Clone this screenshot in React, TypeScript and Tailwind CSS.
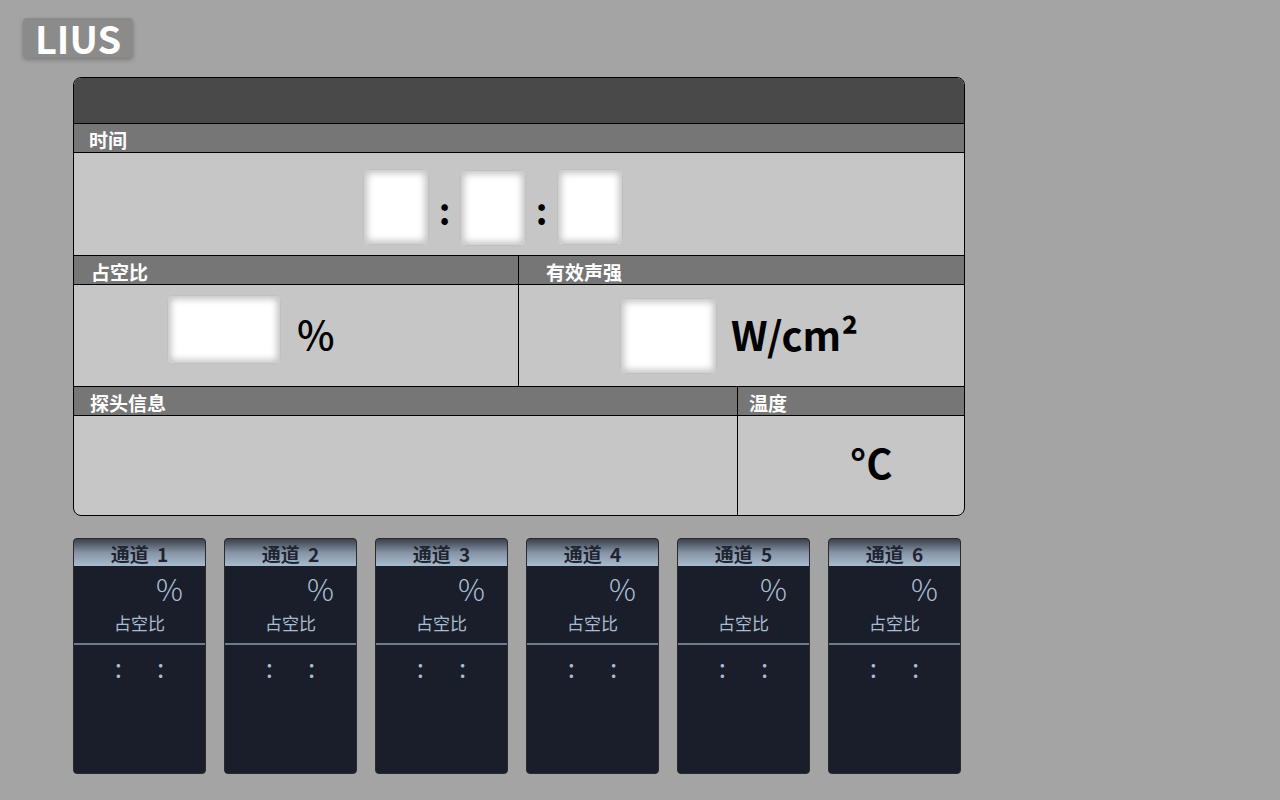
import React from "react"

const channels = [1, 2, 3, 4, 5, 6]

// white value slot with a soft grey inner edge
function Slot({ className }: { className: string }) {
  return <div className={`bg-white rounded-[6px] border border-[#c0c0c0] shadow-[inset_0_0_7px_3px_#c2c2c2] ${className}`} />
}

function SectionHead({ label, pad }: { label: string; pad: string }) {
  return (
    <div className={`h-[29px] bg-[#767676] border-b border-black flex items-center text-white font-bold text-[19px] leading-none ${pad}`}>
      <span className="mt-[2px]">{label}</span>
    </div>
  )
}

function ChannelCard({ n }: { n: number }) {
  return (
    <div className="w-[133px] h-[236px] rounded-[4px] border border-[#2a2a2a] bg-[#1a1d2a] overflow-hidden flex flex-col">
      <div className="h-[27px] bg-gradient-to-b from-[#3c414d] via-[#8593a4] to-[#a8bbcf] flex items-center justify-center text-[#1e2432] font-bold text-[19px] leading-none [word-spacing:4px]">
        <span className="mt-[1px]">通道 {n}</span>
      </div>
      <div className="mt-[7px] pr-[22px] text-right text-[#a9bdd2] text-[30px] font-light leading-none">%</div>
      <div className="mt-[11px] text-center text-[#a9bdd2] text-[17px] leading-none">占空比</div>
      <div className="mt-[12px] h-[2px] bg-[#6d7b8b]" />
      <div className="pt-[9px] flex justify-center gap-[35px] text-[#a9bdd2] text-[26px] leading-none">
        <span>:</span>
        <span>:</span>
      </div>
    </div>
  )
}

export default function App() {
  return (
    <div className="min-h-screen w-full bg-[#a4a4a4] font-['Noto_Sans_CJK_SC','Noto_Sans',sans-serif]">
      {/* logo */}
      <div className="pt-[18px] pl-[23px]">
        <div className="w-[110px] h-[40px] rounded-[4px] bg-[#8b8b8b] shadow-[0_2px_4px_rgba(0,0,0,0.25)] flex items-center justify-center text-white font-bold text-[38px] leading-none">
          LIUS
        </div>
      </div>

      {/* main panel */}
      <div className="ml-[73px] mt-[19px] w-[892px] border border-black rounded-[8px] overflow-hidden bg-[#c6c6c6]">
        <div className="h-[46px] bg-[#494949] border-b border-black" />

        <SectionHead label="时间" pad="pl-[15px]" />
        <div className="h-[103px] border-b border-black flex items-start pt-[16px] pl-[289px]">
          <Slot className="w-[66px] h-[76px]" />
          <div className="w-[31px] mt-[22px] flex justify-center text-black font-bold text-[36px] leading-none">:</div>
          <Slot className="w-[66px] h-[76px] mt-[1px]" />
          <div className="w-[31px] mt-[22px] flex justify-center text-black font-bold text-[36px] leading-none">:</div>
          <Slot className="w-[66px] h-[76px]" />
        </div>

        <div className="flex border-b border-black">
          <div className="w-[445px] border-r border-black flex flex-col">
            <SectionHead label="占空比" pad="pl-[17px]" />
            <div className="h-[101px] flex items-start pl-[93px]">
              <Slot className="w-[114px] h-[69px] mt-[10px]" />
              <div className="ml-[16px] mt-[28px] text-black font-medium text-[40px] leading-none">%</div>
            </div>
          </div>
          <div className="flex-1 flex flex-col">
            <SectionHead label="有效声强" pad="pl-[27px]" />
            <div className="h-[101px] flex items-start pl-[101px]">
              <Slot className="w-[97px] h-[76px] mt-[13px]" />
              <div className="ml-[14px] mt-[29px] text-black font-bold text-[40px] leading-none">W/cm²</div>
            </div>
          </div>
        </div>

        <div className="flex">
          <div className="w-[664px] border-r border-black flex flex-col">
            <SectionHead label="探头信息" pad="pl-[16px]" />
            <div className="h-[99px]" />
          </div>
          <div className="flex-1 flex flex-col">
            <SectionHead label="温度" pad="pl-[11px]" />
            <div className="h-[99px] pl-[112px] pt-[26px] text-black font-bold text-[40px] leading-none">°C</div>
          </div>
        </div>
      </div>

      {/* channel cards */}
      <div className="ml-[73px] mt-[22px] flex gap-[18px]">
        {channels.map((n) => (
          <ChannelCard key={n} n={n} />
        ))}
      </div>
    </div>
  )
}
